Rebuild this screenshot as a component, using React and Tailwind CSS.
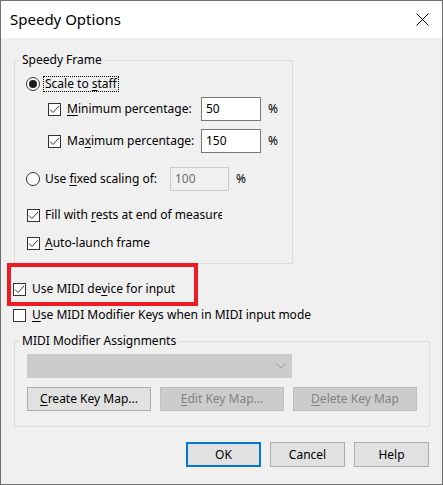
import React from "react";

const font = { fontFamily: '"Segoe UI", "Noto Sans", "Liberation Sans", sans-serif' };

const Check = ({ checked = true }) => (
    <span className="w-[13px] h-[13px] border border-[#333333] bg-white flex items-center justify-center shrink-0">
        {checked && (
            <svg width="11" height="11" viewBox="0 0 11 11">
                <polyline points="1,5.5 4,8.5 10,2" fill="none" stroke="#333333" strokeWidth="1" />
            </svg>
        )}
    </span>
);

const Radio = ({ checked }) => (
    <span className="w-[14px] h-[14px] rounded-full border border-[#333333] bg-white flex items-center justify-center shrink-0">
        {checked && <span className="w-[8px] h-[8px] rounded-full bg-[#1a1a1a]" />}
    </span>
);

const U = ({ children }) => <span className="underline underline-offset-2 decoration-1">{children}</span>;

const Group = ({ label, className, children }) => (
    <div className={`relative border border-[#dcdcdc] ${className}`}>
        <span className="absolute left-[5px] -top-[9px] px-[2px] bg-[#f0f0f0] leading-4">{label}</span>
        {children}
    </div>
);

const Btn = ({ children, disabled, primary, className = "" }) => (
    <div
        className={`flex items-center justify-center leading-4 ${
            primary
                ? "border-2 border-[#0078d7] bg-[#e1e1e1]"
                : disabled
                ? "border border-[#bfbfbf] bg-[#cccccc] text-[#838383]"
                : "border border-[#adadad] bg-[#e1e1e1]"
        } ${className}`}
    >
        {children}
    </div>
);

export default function App() {
    return (
        <div style={font} className="w-[443px] h-[485px] bg-[#f0f0f0] border border-[#707070] flex flex-col text-[12px] text-black">
            {/* Title bar */}
            <div className="h-[37px] bg-white flex items-center justify-between pl-[9px] pr-[13px] shrink-0">
                <span className="text-[15px] leading-5 -mt-[1px]">Speedy Options</span>
                <svg width="13" height="13" viewBox="0 0 13 13" className="-mt-[1px]">
                    <path d="M0.5 0.5 L12.5 12.5 M12.5 0.5 L0.5 12.5" stroke="#000" strokeWidth="1" />
                </svg>
            </div>

            <div className="relative flex flex-col">
                <Group label="Speedy Frame" className="mt-[22px] ml-[13px] w-[279px] h-[204px]">
                    <div className="flex flex-col pl-[11px] pt-[15px]">
                        <div className="flex items-center h-4">
                            <Radio checked />
                            <span className="ml-[4px] px-[1px] outline-1 outline-dotted outline-black leading-[14px]">
                                Scale to <U>s</U>taff
                            </span>
                        </div>
                        <div className="flex items-center h-6 mt-[5px] pl-[22px]">
                            <Check />
                            <span className="ml-[6px] w-[134px]">
                                <U>M</U>inimum percentage:
                            </span>
                            <span className="w-[60px] h-6 border border-[#7a7a7a] bg-white pl-[4px] flex items-center">50</span>
                            <span className="ml-[7px]">%</span>
                        </div>
                        <div className="flex items-center h-6 mt-[8px] pl-[22px]">
                            <Check />
                            <span className="ml-[6px] w-[134px]">
                                Ma<U>x</U>imum percentage:
                            </span>
                            <span className="w-[60px] h-6 border border-[#7a7a7a] bg-white pl-[4px] flex items-center">150</span>
                            <span className="ml-[7px]">%</span>
                        </div>
                        <div className="flex items-center h-6 mt-[14px]">
                            <Radio />
                            <span className="ml-[5px] w-[125px]">
                                Use <U>f</U>ixed scaling of:
                            </span>
                            <span className="w-[59px] h-6 border border-[#cccccc] bg-[#f0f0f0] text-[#6d6d6d] pl-[4px] flex items-center">100</span>
                            <span className="ml-[7px]">%</span>
                        </div>
                        <div className="flex items-center h-4 mt-[16px] pl-[1px]">
                            <Check />
                            <span className="ml-[5px] w-[177px] overflow-hidden whitespace-nowrap">
                                Fill with <U>r</U>ests at end of measure
                            </span>
                        </div>
                        <div className="flex items-center h-4 mt-[12px] pl-[1px]">
                            <Check />
                            <span className="ml-[5px]">
                                <U>A</U>uto-launch frame
                            </span>
                        </div>
                    </div>
                </Group>

                <div className="flex items-center h-4 mt-[17px] pl-[12px]">
                    <Check />
                    <span className="ml-[6px]">
                        Use MIDI de<U>v</U>ice for input
                    </span>
                </div>
                <div className="flex items-center h-4 mt-[10px] pl-[12px]">
                    <Check checked={false} />
                    <span className="ml-[6px]">
                        <U>U</U>se MIDI Modifier Keys when in MIDI input mode
                    </span>
                </div>

                {/* highlight box */}
                <div className="absolute left-[6px] top-[225px] w-[191px] h-[43px] border-4 border-[#ed1c24]" />

                <Group label="MIDI Modifier Assignments" className="mt-[18px] ml-[13px] w-[416px] h-[86px]">
                    <div className="flex flex-col pl-[12px] pt-[12px]">
                        <div className="w-[265px] h-6 bg-[#cccccc] border border-[#cccccc] flex items-center justify-end pr-[5px]">
                            <svg width="10" height="6" viewBox="0 0 10 6">
                                <polyline points="0.5,0.5 5,5 9.5,0.5" fill="none" stroke="#a0a0a0" strokeWidth="1" />
                            </svg>
                        </div>
                        <div className="flex gap-[9px] mt-[9px]">
                            <Btn className="w-[124px] h-6">
                                <span>
                                    <U>C</U>reate Key Map...
                                </span>
                            </Btn>
                            <Btn disabled className="w-[124px] h-6">
                                <span>
                                    <U>E</U>dit Key Map...
                                </span>
                            </Btn>
                            <Btn disabled className="w-[124px] h-6">
                                <span>
                                    <U>D</U>elete Key Map
                                </span>
                            </Btn>
                        </div>
                    </div>
                </Group>

                <div className="flex gap-[9px] mt-[15px] ml-[185px]">
                    <Btn primary className="w-[75px] h-[25px]">OK</Btn>
                    <Btn className="w-[75px] h-[25px]">Cancel</Btn>
                    <Btn className="w-[75px] h-[25px]">Help</Btn>
                </div>
            </div>
        </div>
    );
}
